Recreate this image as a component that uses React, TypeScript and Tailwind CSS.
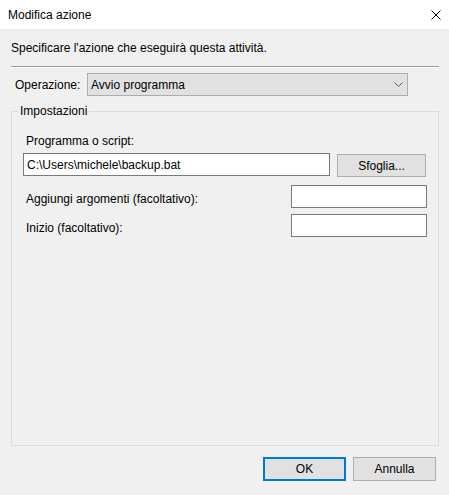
import React from 'react';

const font = { fontFamily: '"Liberation Sans", Arial, sans-serif' };

const TextBox: React.FC<{ value?: string; className?: string }> = ({ value = '', className = '' }) => (
  <div className={`h-[23px] border border-[#7a7a7a] bg-white flex items-center px-[3px] text-[12px] text-black ${className}`}>
    {value}
  </div>
);

const PushButton: React.FC<{ label: string; primary?: boolean; className?: string }> = ({ label, primary, className = '' }) => (
  <button
    className={`h-[24px] w-[83px] bg-[#e1e1e1] text-[12px] text-black flex items-center justify-center ${
      primary ? 'border-2 border-[#0078d7]' : 'border border-[#adadad]'
    } ${className}`}
  >
    {label}
  </button>
);

export default function App() {
  return (
    <div className="w-[449px] h-[495px] bg-[#f0f0f0] flex flex-col text-[12px] leading-[16px] text-black" style={font}>
      {/* Title bar */}
      <div className="h-[29px] bg-white flex items-center justify-between pl-[8px] pr-[8px] shrink-0">
        <span>Modifica azione</span>
        <svg width="10" height="10" viewBox="0 0 10 10">
          <path d="M0.5 0.5 L9.5 9.5 M9.5 0.5 L0.5 9.5" stroke="#000" strokeWidth="1" fill="none" />
        </svg>
      </div>

      {/* Body */}
      <div className="flex-1 flex flex-col pl-[11px] pr-[10px]">
        <div className="mt-[11px]">Specificare l'azione che eseguirà questa attività.</div>

        <div className="mt-[10px] h-[2px] border-t border-[#a0a0a0] border-b border-b-white" />

        <div className="mt-[5px] flex items-center">
          <span className="ml-[4px] w-[72px]">Operazione:</span>
          <div className="h-[23px] w-[321px] border border-[#adadad] bg-[#e1e1e1] flex items-center justify-between pl-[3px] pr-[4px]">
            <span>Avvio programma</span>
            <svg width="9" height="5" viewBox="0 0 9 5">
              <path d="M0.5 0.5 L4.5 4.5 L8.5 0.5" stroke="#606060" strokeWidth="1" fill="none" />
            </svg>
          </div>
        </div>

        <fieldset className="mt-[7px] flex-1 border border-[#dcdcdc] pl-[11px] pr-[11px] min-w-0">
          <legend className="-ml-[5px] px-[2px]">Impostazioni</legend>

          <div className="mt-[14px] ml-[3px]">Programma o script:</div>
          <div className="mt-[4px] flex items-start">
            <TextBox value="C:\Users\michele\backup.bat" className="w-[307px]" />
            <PushButton label="Sfoglia..." className="ml-[7px] mt-[1px] !w-[89px] !h-[23px]" />
          </div>

          <div className="mt-[8px] flex items-center justify-between">
            <span className="ml-[3px] mt-[5px]">Aggiungi argomenti (facoltativo):</span>
            <TextBox className="w-[136px]" />
          </div>
          <div className="mt-[6px] flex items-center justify-between">
            <span className="ml-[3px] mt-[5px]">Inizio (facoltativo):</span>
            <TextBox className="w-[136px]" />
          </div>
        </fieldset>

        <div className="mt-[11px] mb-[14px] flex justify-end gap-[7px] pr-[3px]">
          <PushButton label="OK" primary />
          <PushButton label="Annulla" />
        </div>
      </div>
    </div>
  );
}
